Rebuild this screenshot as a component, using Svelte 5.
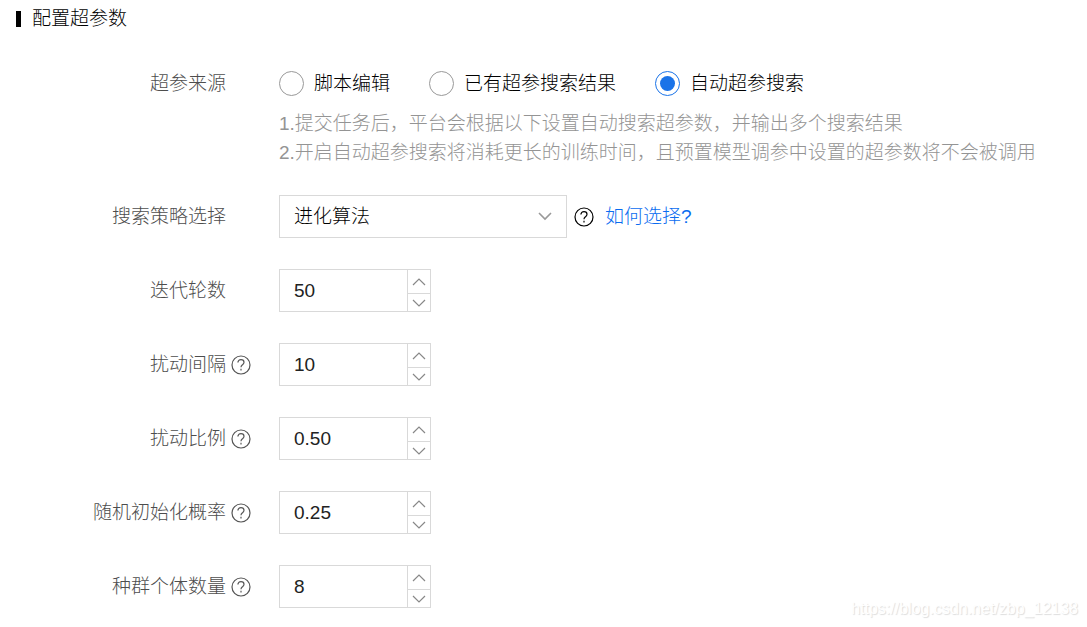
<script>
  const sources = [
    { value: 'script', label: '脚本编辑' },
    { value: 'existing', label: '已有超参搜索结果' },
    { value: 'auto', label: '自动超参搜索' }
  ];
  let source = $state('auto');
  let strategy = $state('evolution');

  let fields = $state([
    { id: 'rounds', label: '迭代轮数', value: '50', step: 1, digits: 0, help: false },
    { id: 'interval', label: '扰动间隔', value: '10', step: 1, digits: 0, help: true },
    { id: 'ratio', label: '扰动比例', value: '0.50', step: 0.01, digits: 2, help: true },
    { id: 'probability', label: '随机初始化概率', value: '0.25', step: 0.01, digits: 2, help: true },
    { id: 'population', label: '种群个体数量', value: '8', step: 1, digits: 0, help: true }
  ]);

  function change(field, direction) {
    const next = Math.max(0, Number(field.value) + direction * field.step);
    field.value = next.toFixed(field.digits);
  }
</script>

{#snippet helpIcon()}
  <svg class="icon" width="20" height="20" viewBox="0 0 20 20" aria-hidden="true">
    <circle cx="10" cy="10" r="9" />
    <path d="M6.900 7.600C6.900 5.600 8.200 4.600 10 4.600s3 1.100 3 2.700c0 1.300-.8 1.900-1.600 2.600S10 11 10 12.300" />
    <path d="M10 13.700v1.700" />
  </svg>
{/snippet}

<main>
  <h1>配置超参数</h1>

  <form>
    <div class="row source" role="radiogroup" aria-labelledby="source-label">
      <span class="label" id="source-label">超参来源</span>
      <div class="help"></div>
      <div class="control">
        <div class="radios">
          {#each sources as item}
            <label class="radio">
              <input type="radio" name="source" value={item.value} bind:group={source} />
              {item.label}
            </label>
          {/each}
        </div>
        <p>1.提交任务后，平台会根据以下设置自动搜索超参数，并输出多个搜索结果</p>
        <p>2.开启自动超参搜索将消耗更长的训练时间，且预置模型调参中设置的超参数将不会被调用</p>
      </div>
    </div>

    <div class="row">
      <label class="label" for="strategy">搜索策略选择</label>
      <div class="help"></div>
      <div class="control inline">
        <div class="select">
          <select id="strategy" bind:value={strategy}>
            <option value="evolution">进化算法</option>
          </select>
          <svg class="arrow" width="16" height="10" viewBox="0 0 16 10" aria-hidden="true">
            <path d="M2 2l6 6 6-6" />
          </svg>
        </div>
        <span class="tip">{@render helpIcon()}</span>
        <a href="#strategy">如何选择?</a>
      </div>
    </div>

    {#each fields as field}
      <div class="row">
        <label class="label" for={field.id}>{field.label}</label>
        <div class="help">
          {#if field.help}{@render helpIcon()}{/if}
        </div>
        <div class="control">
          <div class="number">
            <input id={field.id} type="text" inputmode="decimal" bind:value={field.value} />
            <div class="steps">
              <button type="button" aria-label="增加" onclick={() => change(field, 1)}>
                <svg width="14" height="8" viewBox="0 0 14 8"><path d="M1 7l6-6 6 6" /></svg>
              </button>
              <button type="button" aria-label="减少" onclick={() => change(field, -1)}>
                <svg width="14" height="8" viewBox="0 0 14 8"><path d="M1 1l6 6 6-6" /></svg>
              </button>
            </div>
          </div>
        </div>
      </div>
    {/each}
  </form>

  <div class="watermark">https://blog.csdn.net/zbp_12138</div>
</main>

<style>
  :global(body) {
    margin: 0;
    background: #fff;
  }
  main {
    position: relative;
    padding: 4px 16px 19px;
    font-family: 'Liberation Sans', 'Noto Sans CJK SC', sans-serif;
    font-size: 19px;
    font-weight: 300;
    line-height: 29px;
    color: #000;
  }
  h1 {
    display: flex;
    align-items: center;
    gap: 11px;
    margin: 0 0 38px;
    font-size: 19px;
    font-weight: 300;
  }
  h1::before {
    content: '';
    width: 5px;
    height: 16px;
    background: #000;
  }
  form {
    display: flex;
    flex-direction: column;
    gap: 31px;
  }
  .row {
    display: grid;
    grid-template-columns: 210px 53px minmax(0, 1fr);
    align-items: center;
    min-height: 43px;
  }
  .source {
    align-items: start;
    line-height: 25px;
  }
  .label {
    text-align: right;
    color: #4d4d4d;
  }
  .help {
    display: flex;
    padding-left: 5px;
    color: #555;
  }
  .icon {
    display: block;
    fill: none;
    stroke: currentColor;
    stroke-width: 1.2;
  }
  .radios {
    display: flex;
    flex-wrap: wrap;
    gap: 8px 39px;
    margin-bottom: 13px;
  }
  .radio {
    display: flex;
    align-items: center;
    gap: 10px;
  }
  .radio input {
    appearance: none;
    display: grid;
    place-items: center;
    width: 25px;
    height: 25px;
    margin: 0;
    border: 1px solid #999;
    border-radius: 50%;
    background: #fff;
  }
  .radio input:checked {
    border-color: #1a73e8;
  }
  .radio input:checked::before {
    content: '';
    width: 15px;
    height: 15px;
    border-radius: 50%;
    background: #1a73e8;
  }
  p {
    margin: 0;
    line-height: 29px;
    color: #949494;
  }
  p:last-child {
    margin-bottom: -3px;
  }
  .inline {
    display: flex;
    align-items: center;
  }
  .select {
    position: relative;
    width: 288px;
  }
  select {
    appearance: none;
    display: block;
    width: 100%;
    height: 43px;
    padding: 0 40px 0 14px;
    border: 1px solid #d9d9d9;
    border-radius: 0;
    background: #fff;
    font: inherit;
    color: #000;
  }
  .arrow {
    position: absolute;
    right: 14px;
    top: 16px;
    fill: none;
    stroke: #999;
    stroke-width: 1.6;
    pointer-events: none;
  }
  .tip {
    margin: 0 11px 0 7px;
  }
  a {
    color: #0a6cf0;
    text-decoration: none;
  }
  .number {
    display: flex;
    box-sizing: border-box;
    width: 152px;
    height: 43px;
    border: 1px solid #d9d9d9;
  }
  .number input {
    flex: 1;
    min-width: 0;
    padding: 0 14px;
    border: 0;
    background: none;
    font: inherit;
    color: #222;
  }
  .steps {
    display: grid;
    grid-template-rows: 23px 18px;
    width: 22px;
    border-left: 1px solid #d9d9d9;
  }
  button {
    display: grid;
    place-items: center;
    padding: 0;
    border: 0;
    background: none;
  }
  button + button {
    border-top: 1px solid #d9d9d9;
  }
  button svg {
    fill: none;
    stroke: #888;
    stroke-width: 1.2;
  }
  .watermark {
    position: absolute;
    right: 9px;
    bottom: 9px;
    font-size: 16px;
    line-height: 18px;
    color: #fff;
    text-shadow: 1px 1px 1px #ddd;
  }
</style>
